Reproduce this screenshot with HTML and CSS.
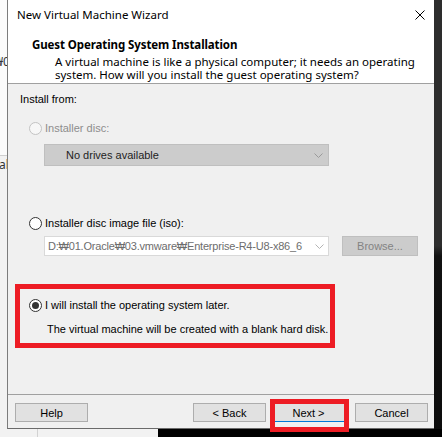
FILE: index.html
```html
<!DOCTYPE html>
<html>
<head>
<meta charset="utf-8">
<title>New Virtual Machine Wizard</title>
<link rel="stylesheet" href="styles.css">
</head>
<body>
<div class="desktop">
  <div class="bg-left-top"><span class="bg-txt t1">₩0</span></div>
  <span class="bg-txt t2">al</span>
  <div class="bg-right"></div>
  <div class="bg-vline"></div>
  <div class="bg-black"></div>

  <div class="dialog">
    <div class="titlebar">
      <span class="title">New Virtual Machine Wizard</span>
      <svg class="close" width="10" height="10" viewBox="0 0 10 10"><path d="M0.5 0.5 L9.5 9.5 M9.5 0.5 L0.5 9.5" stroke="#000" stroke-width="1" fill="none"/></svg>
    </div>
    <div class="header">
      <div class="h-title">Guest Operating System Installation</div>
      <div class="h-desc">A virtual machine is like a physical computer; it needs an operating<br>system. How will you install the guest operating system?</div>
    </div>
    <div class="body">
      <div class="label">Install from:</div>
      <div class="radio-row disabled row-disc"><span class="radio"></span><span>Installer disc:</span></div>
      <div class="combo combo-disabled">
        <span class="combo-text">No drives available</span>
        <svg class="chev" width="9" height="5" viewBox="0 0 9 5"><path d="M0.5 0.5 L4.5 4.5 L8.5 0.5" stroke="#9a9a9a" fill="none"/></svg>
      </div>
      <div class="radio-row row-iso"><span class="radio"></span><span>Installer disc image file (iso):</span></div>
      <div class="iso-row">
        <div class="combo combo-iso">
          <span class="iso-text">D:₩01.Oracle₩03.vmware₩Enterprise-R4-U8-x86_6</span>
          <svg class="chev" width="9" height="5" viewBox="0 0 9 5"><path d="M0.5 0.5 L4.5 4.5 L8.5 0.5" stroke="#b4b4b4" fill="none"/></svg>
        </div>
        <div class="btn btn-disabled">Browse...</div>
      </div>
      <div class="later">
        <div class="radio-row"><span class="radio checked"></span><span>I will install the operating system later.</span></div>
        <div class="note">The virtual machine will be created with a blank hard disk.</div>
      </div>
    </div>
    <div class="footer">
      <div class="btn">Help</div>
      <div class="spacer"></div>
      <div class="btn">&lt; Back</div>
      <div class="btn btn-default">Next &gt;</div>
      <div class="btn btn-cancel">Cancel</div>
    </div>
  </div>

  <div class="mark-next"></div>
</div>
</body>
</html>
```

FILE: styles.css
```css
* { box-sizing: border-box; }
html, body { margin: 0; padding: 0; }
body {
  width: 442px;
  height: 437px;
  overflow: hidden;
  font-family: "Noto Sans", "DejaVu Sans", sans-serif;
  font-size: 11.5px;
  color: #000;
}
.desktop {
  position: relative;
  width: 442px;
  height: 437px;
  background: #f2f2f2;
  overflow: hidden;
}
.bg-left-top {
  position: absolute;
  left: 0; top: 0;
  width: 8px; height: 156px;
  background: #fbfbfb;
  border-bottom: 1px solid #cfcfcf;
}
.bg-txt { position: absolute; color: #333; font-size: 12px; line-height: 16px; }
.t1 { left: -5px; top: 54px; }
.t2 { left: -1px; top: 157px; }
.bg-right {
  position: absolute;
  left: 434px; top: 0;
  width: 8px; height: 437px;
  background: linear-gradient(to bottom, #2d2d2d 0, #2d2d2d 246px, #121212 256px, #0c0c0c 437px);
}
.bg-vline {
  position: absolute;
  left: 37px; top: 429px;
  width: 1px; height: 8px;
  background: #d2d2d2;
}
.bg-black {
  position: absolute;
  left: 158px; top: 429px;
  width: 284px; height: 8px;
  background: #000;
}

.dialog {
  position: absolute;
  left: 7px; top: 0;
  width: 427px; height: 429px;
  border-left: 1px solid #7c7c7c;
  border-bottom: 1px solid #6a6a6a;
  background: #f0f0f0;
  display: flex;
  flex-direction: column;
}
.titlebar {
  height: 30px;
  flex: none;
  background: #fff;
  display: flex;
  align-items: center;
  justify-content: space-between;
  padding: 0 9px 0 9px;
}
.title { font-size: 11.5px; line-height: 16px; }
.close { display: block; }

.header {
  height: 54px;
  flex: none;
  background: #fff;
  border-bottom: 1px solid #a0a0a0;
  padding: 7px 0 0 24px;
}
.h-title { font-weight: bold; line-height: 16px; letter-spacing: -0.1px; }
.h-desc { margin-top: 2px; padding-left: 23px; line-height: 13px; }

.body, .footer {
  font-family: "Liberation Sans", Arial, sans-serif;
  font-size: 11px;
}
.body {
  flex: 1;
  padding: 7px 0 0 0;
  display: flex;
  flex-direction: column;
  align-items: flex-start;
}
.label { line-height: 16px; padding-left: 12px; }
.radio-row {
  display: flex;
  align-items: center;
  line-height: 16px;
  height: 16px;
  padding-left: 21px;
  white-space: nowrap;
}
.radio {
  width: 13px; height: 13px;
  border: 1px solid #333;
  border-radius: 50%;
  background: #fff;
  margin-right: 3px;
  flex: none;
  display: flex;
  align-items: center;
  justify-content: center;
}
.radio.checked::after {
  content: "";
  width: 7px; height: 7px;
  border-radius: 50%;
  background: #333;
}
.disabled { color: #8d8d8d; }
.disabled .radio { border-color: #c3c3c3; background: #f7f7f7; }
.row-disc { margin-top: 13px; }

.combo {
  margin-left: 36px;
  width: 285px;
  display: flex;
  align-items: center;
  border: 1px solid #bfbfbf;
}
.combo-disabled {
  margin-top: 8px;
  height: 22px;
  background: #cccccc;
  padding: 0 5px 0 21px;
}
.combo-text { flex: 1; color: #1e1e1e; line-height: 16px; }
.chev { display: block; flex: none; }

.row-iso { margin-top: 49px; }
.iso-row {
  margin-top: 5px;
  display: flex;
  gap: 13px;
}
.combo-iso {
  height: 20px;
  background: #fff;
  border-color: #d9d9d9;
  padding: 0 4px 0 3px;
}
.iso-text {
  flex: 1;
  overflow: hidden;
  white-space: nowrap;
  color: #6d6d6d;
  line-height: 16px;
  letter-spacing: -0.2px;
}
.combo-iso .chev { margin-left: 6px; }

.btn {
  width: 73px;
  height: 19px;
  background: #e1e1e1;
  border: 1px solid #adadad;
  display: flex;
  align-items: center;
  justify-content: center;
  line-height: 16px;
  flex: none;
}
.btn-disabled {
  width: 76px;
  height: 20px;
  background: #cccccc;
  border-color: #bfbfbf;
  color: #838383;
}
.btn-default { border-color: #0078d7; }

.later {
  margin: 28px 0 0 7px;
  width: 320px;
  border: 5px solid #ed1c24;
  padding: 8px 0 6px 9px;
}
.later .radio-row { padding-left: 0; }
.note { margin-top: 8px; padding-left: 18px; line-height: 16px; white-space: nowrap; }

.footer {
  height: 34px;
  flex: none;
  border-top: 1px solid #a0a0a0;
  padding: 8px 6px 0 7px;
  display: flex;
  align-items: flex-start;
  gap: 6px;
}
.spacer { flex: 1; }
.btn-cancel { margin-left: 4px; }

.mark-next {
  position: absolute;
  left: 270px; top: 399px;
  width: 79px; height: 33px;
  border: 5px solid #ed1c24;
}
```
